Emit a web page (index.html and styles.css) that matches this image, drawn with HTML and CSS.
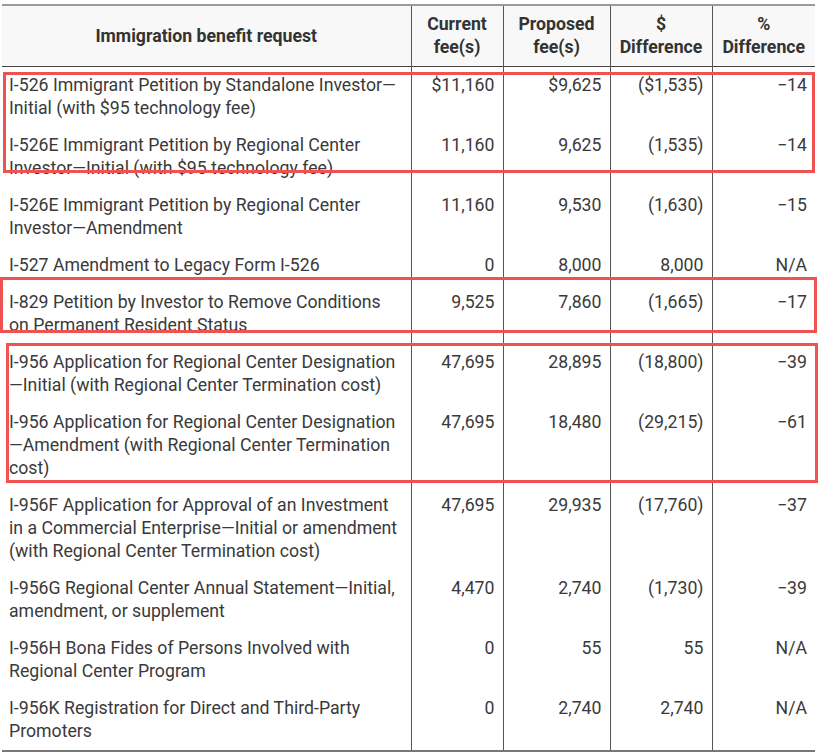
FILE: index.html
```html
<!DOCTYPE html>
<html lang="en">
<head>
<meta charset="utf-8">
<title>Immigration benefit request fees</title>
<link rel="stylesheet" href="styles.css">
</head>
<body>
<div class="wrap">
  <table class="fees">
    <colgroup>
      <col class="c-name">
      <col class="c-cur">
      <col class="c-prop">
      <col class="c-diff">
      <col class="c-pct">
    </colgroup>
    <thead>
      <tr>
        <th>Immigration benefit request</th>
        <th>Current fee(s)</th>
        <th>Proposed fee(s)</th>
        <th>$ Difference</th>
        <th>% Difference</th>
      </tr>
    </thead>
    <tbody>
      <tr><td>I-526 Immigrant Petition by Standalone Investor—Initial (with $95 technology fee)</td><td>$11,160</td><td>$9,625</td><td>($1,535)</td><td>−14</td></tr>
      <tr><td>I-526E Immigrant Petition by Regional Center Investor—Initial (with $95 technology fee)</td><td>11,160</td><td>9,625</td><td>(1,535)</td><td>−14</td></tr>
      <tr><td>I-526E Immigrant Petition by Regional Center Investor—Amendment</td><td>11,160</td><td>9,530</td><td>(1,630)</td><td>−15</td></tr>
      <tr><td>I-527 Amendment to Legacy Form I-526</td><td>0</td><td>8,000</td><td>8,000</td><td>N/A</td></tr>
      <tr><td>I-829 Petition by Investor to Remove Conditions on Permanent Resident Status</td><td>9,525</td><td>7,860</td><td>(1,665)</td><td>−17</td></tr>
      <tr><td>I-956 Application for Regional Center Designation—Initial (with Regional Center Termination cost)</td><td>47,695</td><td>28,895</td><td>(18,800)</td><td>−39</td></tr>
      <tr><td>I-956 Application for Regional Center Designation—Amendment (with Regional Center Termination cost)</td><td>47,695</td><td>18,480</td><td>(29,215)</td><td>−61</td></tr>
      <tr><td>I-956F Application for Approval of an Investment in a Commercial Enterprise—Initial or amendment (with Regional Center Termination cost)</td><td>47,695</td><td>29,935</td><td>(17,760)</td><td>−37</td></tr>
      <tr><td>I-956G Regional Center Annual Statement—Initial, amendment, or supplement</td><td>4,470</td><td>2,740</td><td>(1,730)</td><td>−39</td></tr>
      <tr><td>I-956H Bona Fides of Persons Involved with Regional Center Program</td><td>0</td><td>55</td><td>55</td><td>N/A</td></tr>
      <tr><td>I-956K Registration for Direct and Third-Party Promoters</td><td>0</td><td>2,740</td><td>2,740</td><td>N/A</td></tr>
    </tbody>
  </table>
  <div class="mark mark-1"></div>
  <div class="mark mark-2"></div>
  <div class="mark mark-3"></div>
</div>
</body>
</html>
```

FILE: styles.css
```css
html, body {
  margin: 0;
  padding: 0;
  background: #ffffff;
}

.wrap {
  position: relative;
  width: 813px;
  margin: 4px 0 0 2px;
}

.fees {
  width: 813px;
  table-layout: fixed;
  border-collapse: collapse;
  font-family: Roboto, "Liberation Sans", sans-serif;
  font-size: 17.7px;
  line-height: 23px;
  color: #3a3a3a;
}

.c-name { width: 409px; }
.c-cur { width: 92px; }
.c-prop { width: 107px; }
.c-diff { width: 102px; }
.c-pct { width: 103px; }

.fees thead tr {
  background: #f8f8f8;
  border-top: 2px solid #9a9a9a;
  border-bottom: 1px solid #444;
}

.fees th {
  font-weight: 700;
  color: #333;
  text-align: center;
  vertical-align: middle;
  padding: 7px 4px;
}

.fees td {
  padding: 7px 8px;
  vertical-align: top;
  text-align: right;
}

.fees td:first-child {
  text-align: left;
  padding-left: 7px;
  padding-right: 6px;
}

.fees th + th,
.fees td + td {
  border-left: 1px solid #555;
}

.fees tbody tr:last-child {
  border-bottom: 2px solid #777;
}

.mark {
  position: absolute;
  border: 3px solid #f05252;
  box-sizing: border-box;
  pointer-events: none;
}

.mark-1 { left: 1px; top: 68px; width: 812px; height: 101px; }
.mark-2 { left: -2px; top: 273px; width: 817px; height: 56px; }
.mark-3 { left: 4px; top: 339px; width: 812px; height: 140px; }
```
